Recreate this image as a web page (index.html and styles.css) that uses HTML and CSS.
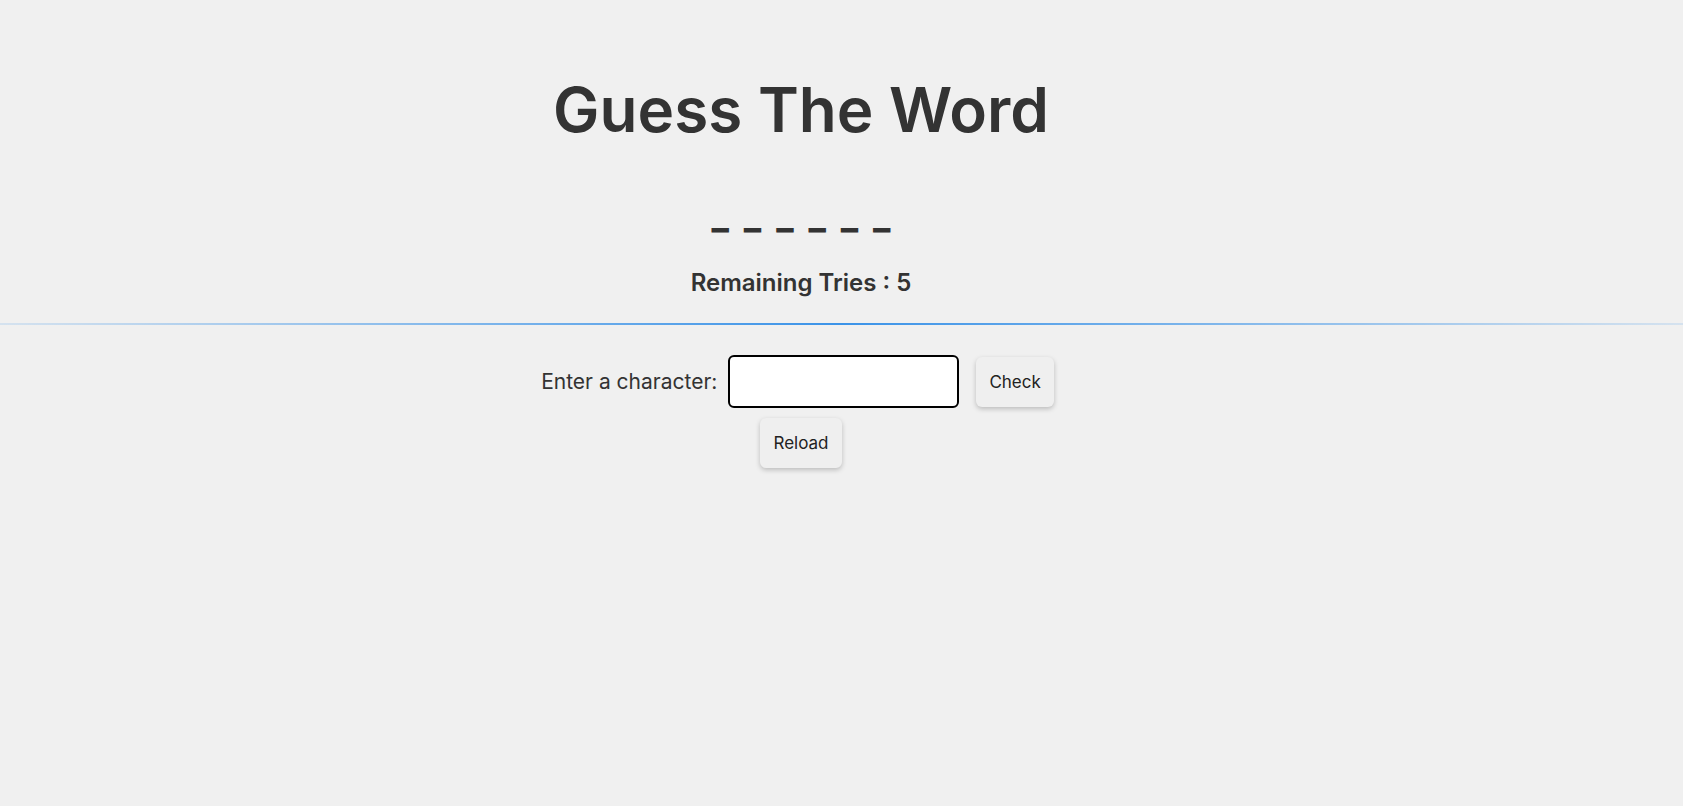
FILE: index.html
```html
<!DOCTYPE html>
<html lang="en">
<head>
<meta charset="utf-8">
<title>Guess The Word</title>
<link rel="stylesheet" href="styles.css">
</head>
<body>
<main class="game">
  <h1 class="title">Guess The Word</h1>
  <p class="word">_ _ _ _ _ _</p>
  <p class="tries">Remaining Tries : 5</p>
</main>
<hr class="divider">
<section class="game controls">
  <div class="row row-input">
    <label class="label" for="guess">Enter a character:</label>
    <input class="input" id="guess" type="text">
    <button class="btn">Check</button>
  </div>
  <div class="row">
    <button class="btn">Reload</button>
  </div>
</section>
</body>
</html>
```
FILE: styles.css
```css
html, body {
  margin: 0;
  padding: 0;
}
body {
  background: #f0f0f0;
  color: #333333;
  font-family: Inter, "Noto Sans", sans-serif;
}
.game {
  padding-right: 81px;
  display: flex;
  flex-direction: column;
  align-items: center;
}
.title {
  margin: 72px 0 0;
  font-size: 62px;
  font-weight: 600;
  line-height: 76px;
  letter-spacing: 0;
}
.word {
  margin: 46px 0 0;
  font-size: 36px;
  font-weight: 800;
  line-height: 42px;
  word-spacing: 7px;
}
.tries {
  margin: 31px 0 0;
  font-size: 24px;
  font-weight: 600;
  line-height: 32px;
}
.divider {
  margin: 24px 0 0;
  border: 0;
  height: 2px;
  background: linear-gradient(to right, rgba(59,147,232,0.15), #3b93e8 50%, rgba(59,147,232,0.15));
}
.controls {
  padding-top: 30px;
  gap: 10px;
  padding-bottom: 10px;
}
.row {
  display: flex;
  align-items: center;
}
.row-input {
  margin-right: 7px;
}
.label {
  font-size: 21px;
  margin-right: 11px;
}
.input {
  width: 231px;
  height: 53px;
  box-sizing: border-box;
  border: 2px solid #000;
  border-radius: 6px;
  background: #fff;
  margin: 0 17px 0 0;
  padding: 0 8px;
  font-size: 18px;
}
.btn {
  height: 50px;
  padding: 0 13px;
  border: 0;
  border-radius: 6px;
  background: #efefef;
  box-shadow: 0 2px 5px rgba(0,0,0,0.22);
  font-family: Inter, "Noto Sans", sans-serif;
  font-size: 17px;
  color: #222;
}
```
